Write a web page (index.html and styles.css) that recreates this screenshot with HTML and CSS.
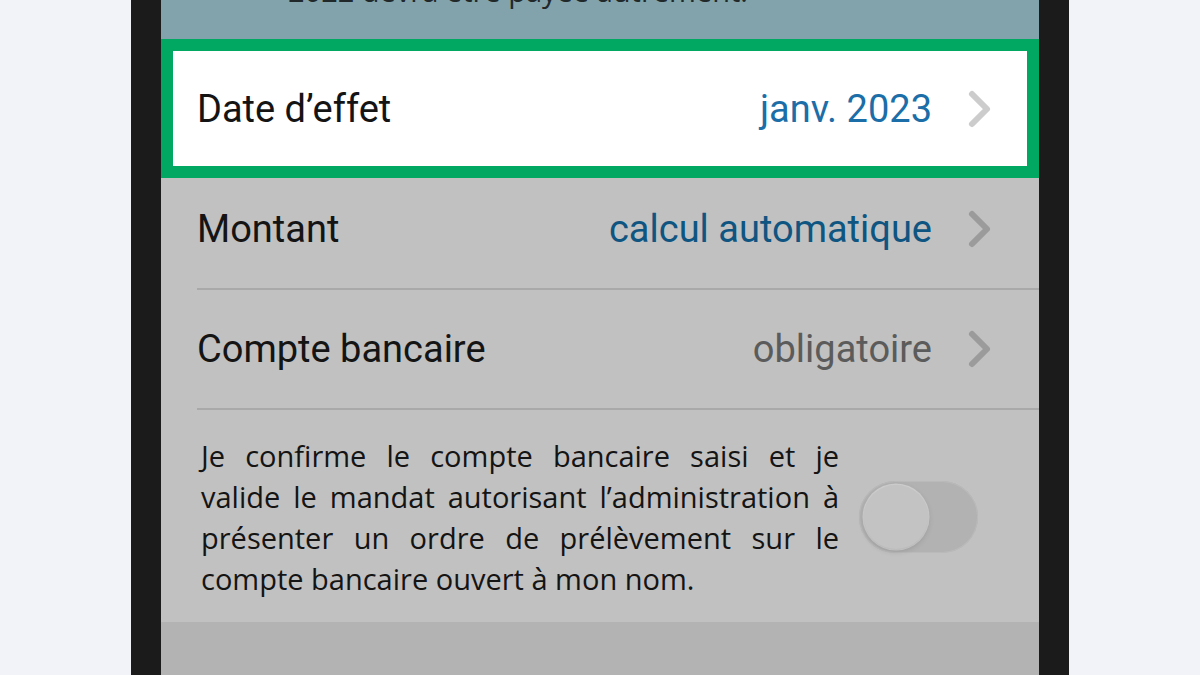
FILE: index.html
```html
<!DOCTYPE html>
<html lang="fr">
<head>
<meta charset="utf-8">
<link rel="stylesheet" href="styles.css">
</head>
<body>
<div class="stage">
  <div class="phone">
    <div class="screen">
      <div class="notice">
        <p class="notice-text">2022 devra être payée autrement.</p>
      </div>
      <div class="row row-highlight">
        <span class="label">Date d’effet</span>
        <span class="value value-blue">janv. 2023</span>
        <svg class="chev" viewBox="0 0 30 42" width="30" height="42"><path d="M7 6 L22 21 L7 36" fill="none" stroke="currentColor" stroke-width="6" stroke-linecap="round" stroke-linejoin="round"/></svg>
      </div>
      <div class="dim">
        <div class="row row-first">
          <span class="label">Montant</span>
          <span class="value value-blue-dim">calcul automatique</span>
          <svg class="chev" viewBox="0 0 30 42" width="30" height="42"><path d="M7 6 L22 21 L7 36" fill="none" stroke="currentColor" stroke-width="6" stroke-linecap="round" stroke-linejoin="round"/></svg>
        </div>
        <div class="row">
          <span class="label">Compte bancaire</span>
          <span class="value value-gray">obligatoire</span>
          <svg class="chev" viewBox="0 0 30 42" width="30" height="42"><path d="M7 6 L22 21 L7 36" fill="none" stroke="currentColor" stroke-width="6" stroke-linecap="round" stroke-linejoin="round"/></svg>
        </div>
        <div class="confirm">
          <p class="confirm-text">
            <span class="line">Je confirme le compte bancaire saisi et je</span>
            <span class="line">valide le mandat autorisant l’administration à</span>
            <span class="line">présenter un ordre de prélèvement sur le</span>
            <span class="line line-last">compte bancaire ouvert à mon nom.</span>
          </p>
          <div class="toggle"><div class="thumb"></div></div>
        </div>
      </div>
      <div class="footer-band"></div>
    </div>
  </div>
</div>
</body>
</html>
```
FILE: styles.css
```css
* { box-sizing: border-box; }
html, body { margin: 0; padding: 0; }
body {
  background: #f2f3f8;
  width: 1200px;
  height: 675px;
  overflow: hidden;
}
.stage {
  display: flex;
  justify-content: center;
  height: 675px;
}
.phone {
  width: 938px;
  height: 675px;
  background: #1b1b1b;
  padding: 0 30px;
}
.screen {
  height: 675px;
  background: #c1c1c1;
  display: flex;
  flex-direction: column;
  overflow: hidden;
}
.notice {
  height: 39px;
  background: #82a3ab;
  overflow: hidden;
  padding-left: 127px;
}
.notice-text {
  margin: -27px 0 0 0;
  font-family: "Open Sans", "Noto Sans", sans-serif;
  font-size: 29px;
  line-height: 36px;
  color: #20282a;
  white-space: nowrap;
}
.row {
  display: flex;
  align-items: center;
  height: 120px;
  margin-left: 36px;
  padding-right: 44px;
  border-bottom: 2px solid #a9a9a9;
  font-family: Roboto, "Liberation Sans", sans-serif;
  font-size: 38px;
}
.row-highlight {
  height: 139px;
  margin-left: 0;
  padding-left: 24px;
  padding-right: 32px;
  background: #fff;
  border: 12px solid #00a862;
}
.row-first {
  height: 112px;
  padding-bottom: 8px;
}
.label {
  flex: 1;
  color: #141414;
}
.value { margin-right: 33px; }
.value-blue { color: #1b6ea8; }
.value-blue-dim { color: #0f5581; }
.value-gray { color: #5b5b5b; }
.chev { color: #cccccc; display: block; }
.dim .chev { color: #9b9b9b; }
.confirm {
  display: flex;
  align-items: flex-start;
  padding: 25px 0 0 40px;
  height: 212px;
}
.confirm-text {
  margin: 0;
  width: 638px;
  font-family: "Open Sans", "Noto Sans", sans-serif;
  font-size: 29px;
  line-height: 41px;
  color: #141414;
}
.line {
  display: block;
  white-space: nowrap;
  text-align: justify;
  text-align-last: justify;
}
.line-last {
  text-align: left;
  text-align-last: left;
}
.toggle {
  margin-left: 20px;
  margin-top: 46px;
  width: 119px;
  height: 72px;
  border-radius: 36px;
  background: #b2b2b2;
  position: relative;
  box-shadow: inset 0 0 0 1px #bababa;
}
.thumb {
  position: absolute;
  left: 5px;
  top: 4px;
  width: 64px;
  height: 64px;
  border-radius: 50%;
  background: #c3c3c3;
  box-shadow: 0 2px 6px rgba(0,0,0,0.16), 0 0 0 1.5px #d2d2d2;
}
.footer-band {
  flex: 1;
  background: #b3b3b3;
}
```
